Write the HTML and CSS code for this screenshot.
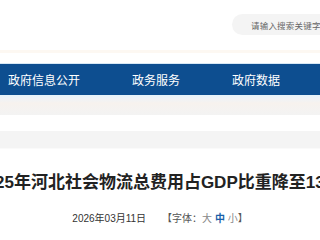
FILE: index.html
```html
<!DOCTYPE html>
<html lang="zh-CN">
<head>
    <meta charset="UTF-8">
    <meta name="viewport" content="width=device-width, initial-scale=1.0">
    <title>河北省人民政府</title>
    <link rel="stylesheet" href="styles.css">
</head>
<body>
  <div class="top">
    <div class="search">
      <span class="search_txt">请输入搜索关键字</span>
    </div>
  </div>
  <div class="top_line"></div>
  <div class="nav">
    <a class="nav_item" href="#">政府信息公开</a>
    <a class="nav_item" href="#">政务服务</a>
    <a class="nav_item" href="#">政府数据</a>
  </div>
  <div class="nav_shadow"></div>
  <div class="crumb"></div>
  <div class="article">
    <h1 class="title">2025年河北社会物流总费用占GDP比重降至13.7%</h1>
    <div class="info">
      <span class="date">2026年03月11日</span>
      <span class="font_size">【字体：<a href="#">大</a> <a href="#" class="on">中</a> <a href="#">小</a>】</span>
    </div>
  </div>
</body>
</html>
```

FILE: styles.css
```css
*{margin:0;padding:0;box-sizing:border-box;}
body{background:#fff;font-family:"Liberation Sans","Noto Sans CJK SC",sans-serif;overflow:hidden;}
a{text-decoration:none;color:inherit;}

.top{height:50px;display:flex;justify-content:flex-end;padding-top:14px;}
.search{width:88px;height:21px;border-radius:11px 0 0 11px;background:#f4f4f4;padding-left:19px;display:flex;align-items:center;}
.search_txt{font-size:8.5px;letter-spacing:0.2px;color:#666;white-space:nowrap;}
.top_line{height:3px;background:#fdf8f2;margin-bottom:10px;}

.nav{height:32px;background:#0d4e90;display:flex;align-items:center;border-top:1px solid #d7e8f5;}
.nav_item{color:#fff;font-size:12px;white-space:nowrap;}
.nav_item:nth-child(1){margin-left:8px;}
.nav_item:nth-child(2){margin-left:52px;}
.nav_item:nth-child(3){margin-left:52px;}
.nav_shadow{height:20px;background:linear-gradient(#e4f3fb 0,#eef3f8 3px,#f7f2ee 8px,#f3f3f3 20px);}

.crumb{height:18px;margin-top:16px;background:#f4f4f4;border-bottom:1px solid #fafafa;}

.article{padding-top:22px;}
.title{font-size:17px;font-weight:bold;color:#222;white-space:nowrap;text-align:center;margin:0 -100px;padding-left:10px;line-height:24px;}
.info{display:flex;justify-content:center;gap:16px;margin-top:15px;font-size:10px;color:#333;}
.font_size{color:#555;}
.font_size a{color:#888;}
.font_size a.on{color:#1a5fa8;font-weight:bold;}
```
